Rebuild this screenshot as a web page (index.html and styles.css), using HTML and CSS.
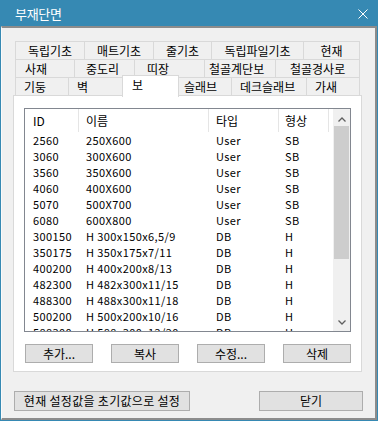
FILE: index.html
```html
<!DOCTYPE html>
<html>
<head>
    <meta charset="utf-8">
    <title>부재단면</title>
    <link rel="stylesheet" href="styles.css">
</head>
<body>
    <div class="window">
        <div class="titlebar">
            <span class="title">부재단면</span>
            <svg class="close" width="10" height="10" viewBox="0 0 10 10">
                <path d="M0.5 0.5 L9.5 9.5 M9.5 0.5 L0.5 9.5" stroke="#fff" stroke-width="1" fill="none"/>
            </svg>
        </div>

        <div class="client">
            <!-- Tab rows -->
            <div class="tabs">
                <div class="tabrow row1">
                    <div class="tab">독립기초</div>
                    <div class="tab">매트기초</div>
                    <div class="tab">줄기초</div>
                    <div class="tab">독립파일기초</div>
                    <div class="tab">현재</div>
                </div>
                <div class="tabrow row2">
                    <div class="tab">사재</div>
                    <div class="tab">중도리</div>
                    <div class="tab">띠장</div>
                    <div class="tab">철골계단보</div>
                    <div class="tab">철골경사로</div>
                </div>
                <div class="tabrow row3">
                    <div class="tab">기둥</div>
                    <div class="tab">벽</div>
                    <div class="tab active">보</div>
                    <div class="tab">슬래브</div>
                    <div class="tab">데크슬래브</div>
                    <div class="tab">가새</div>
                </div>
            </div>

            <!-- Tab page -->
            <div class="page">
                <div class="list">
                    <div class="table">
                        <div class="thead">
                            <div class="th c1">ID</div>
                            <div class="th c2">이름</div>
                            <div class="th c3">타입</div>
                            <div class="th c4">형상</div>
                        </div>
                        <div class="tbody">
                            <div class="tr"><div class="td c1">2560</div><div class="td c2">250X600</div><div class="td c3">User</div><div class="td c4">SB</div></div>
                            <div class="tr"><div class="td c1">3060</div><div class="td c2">300X600</div><div class="td c3">User</div><div class="td c4">SB</div></div>
                            <div class="tr"><div class="td c1">3560</div><div class="td c2">350X600</div><div class="td c3">User</div><div class="td c4">SB</div></div>
                            <div class="tr"><div class="td c1">4060</div><div class="td c2">400X600</div><div class="td c3">User</div><div class="td c4">SB</div></div>
                            <div class="tr"><div class="td c1">5070</div><div class="td c2">500X700</div><div class="td c3">User</div><div class="td c4">SB</div></div>
                            <div class="tr"><div class="td c1">6080</div><div class="td c2">600X800</div><div class="td c3">User</div><div class="td c4">SB</div></div>
                            <div class="tr"><div class="td c1">300150</div><div class="td c2">H 300x150x6,5/9</div><div class="td c3">DB</div><div class="td c4">H</div></div>
                            <div class="tr"><div class="td c1">350175</div><div class="td c2">H 350x175x7/11</div><div class="td c3">DB</div><div class="td c4">H</div></div>
                            <div class="tr"><div class="td c1">400200</div><div class="td c2">H 400x200x8/13</div><div class="td c3">DB</div><div class="td c4">H</div></div>
                            <div class="tr"><div class="td c1">482300</div><div class="td c2">H 482x300x11/15</div><div class="td c3">DB</div><div class="td c4">H</div></div>
                            <div class="tr"><div class="td c1">488300</div><div class="td c2">H 488x300x11/18</div><div class="td c3">DB</div><div class="td c4">H</div></div>
                            <div class="tr"><div class="td c1">500200</div><div class="td c2">H 500x200x10/16</div><div class="td c3">DB</div><div class="td c4">H</div></div>
                            <div class="tr"><div class="td c1">588300</div><div class="td c2">H 588x300x12/20</div><div class="td c3">DB</div><div class="td c4">H</div></div>
                        </div>
                    </div>
                    <div class="scrollbar">
                        <div class="sb-btn up">
                            <svg width="8" height="5" viewBox="0 0 8 5"><path d="M0.5 4.5 L4 1 L7.5 4.5" stroke="#606060" stroke-width="1.3" fill="none"/></svg>
                        </div>
                        <div class="sb-thumb"></div>
                        <div class="sb-track"></div>
                        <div class="sb-btn down">
                            <svg width="8" height="5" viewBox="0 0 8 5"><path d="M0.5 0.5 L4 4 L7.5 0.5" stroke="#606060" stroke-width="1.3" fill="none"/></svg>
                        </div>
                    </div>
                </div>

                <div class="page-buttons">
                    <button class="btn">추가...</button>
                    <button class="btn">복사</button>
                    <button class="btn">수정...</button>
                    <button class="btn">삭제</button>
                </div>
            </div>

            <div class="footer">
                <button class="btn btn-wide">현재 설정값을 초기값으로 설정</button>
                <button class="btn btn-close">닫기</button>
            </div>
        </div>
    </div>
</body>
</html>
```

FILE: styles.css
```css
body { margin: 0; }

.window {
    width: 378px;
    height: 421px;
    box-sizing: border-box;
    border: 1px solid #3689b3;
    background: #f0f0f0;
    display: flex;
    flex-direction: column;
    font-family: "Noto Sans CJK KR", sans-serif;
    font-size: 12px;
    color: #000;
}

.titlebar {
    height: 25px;
    flex: none;
    background: #3689b3;
    color: #fff;
    display: flex;
    align-items: center;
    justify-content: space-between;
    padding: 0 9px 0 14px;
}
.title { font-size: 13px; line-height: 25px; letter-spacing: -0.3px; }
.close { display: block; }

.client {
    flex: 1;
    border-top: 2px solid #8c8c8c;
    border-left: 1px solid #fafafa;
    border-right: 2px solid #8c8c8c;
    border-bottom: 2px solid #8c8c8c;
}

/* tabs */
.tabs { margin: 13px 0 0 13px; width: 345px; }
.tabrow { display: grid; height: 19px; }
.tabrow + .tabrow { margin-top: -1px; }
.row1 { grid-template-columns: 70px 69px 58px 92px 56px; }
.row2 { grid-template-columns: 60px 60px 70px 71px 84px; }
.row3 { grid-template-columns: 54px 54px 56px 53px 75px 53px; }

.tab {
    border: 1px solid #d9d9d9;
    border-left: none;
    background: #f0f0f0;
    line-height: 17px;
    white-space: nowrap;
}
.tab:first-child { border-left: 1px solid #d9d9d9; }
.row1 .tab { text-align: center; }
.row2 .tab:nth-child(1) { padding-left: 9px; }
.row2 .tab:nth-child(2) { padding-left: 11px; }
.row2 .tab:nth-child(3) { padding-left: 12px; }
.row2 .tab:nth-child(4) { padding-left: 4px; }
.row2 .tab:nth-child(5) { padding-left: 14px; }
.row3 .tab { padding-left: 8px; }
.row3 .tab:nth-child(4) { padding-left: 5px; }

.tab.active {
    background: #fff;
    border-left: 1px solid #d9d9d9;
    border-bottom: none;
    margin: -2px 0 -1px -1px;
    padding-left: 9px;
    position: relative;
    z-index: 1;
}

/* tab page */
.page {
    margin: -1px 0 0 11px;
    width: 349px;
    height: 277px;
    box-sizing: border-box;
    border: 1px solid #d9d9d9;
    background: #fff;
    padding: 12px 0 0 10px;
}

.list {
    width: 327px;
    height: 224px;
    box-sizing: border-box;
    border: 1px solid #828790;
    display: flex;
}
.table { width: 308px; overflow: hidden; }
.thead { display: flex; height: 23px; }
.th {
    box-sizing: border-box;
    border-right: 1px solid #e5e5e5;
    line-height: 23px;
    white-space: nowrap;
}
.tbody {
    height: 199px;
    overflow: hidden;
    font-size: 11px;
    letter-spacing: 0.4px;
}
.tr { display: flex; height: 16px; line-height: 16px; }
.td { box-sizing: border-box; white-space: nowrap; }

.c1 { width: 54px; padding-left: 8px; }
.c2 { width: 130px; padding-left: 7px; }
.c3 { width: 70px; padding-left: 7px; }
.c4 { width: 50px; padding-left: 6px; }

.scrollbar {
    width: 17px;
    background: #f0f0f0;
    display: flex;
    flex-direction: column;
}
.sb-btn { height: 17px; display: flex; justify-content: center; align-items: center; }
.sb-btn svg { display: block; }
.sb-btn.up { padding-top: 3px; box-sizing: border-box; }
.sb-thumb { margin: 0 1px; height: 133px; background: #cdcdcd; }
.sb-track { flex: 1; }

/* buttons */
.btn {
    box-sizing: border-box;
    height: 19px;
    width: 68px;
    padding: 0;
    border: 1px solid #adadad;
    background: #e1e1e1;
    font-family: "Noto Sans CJK KR", sans-serif;
    font-size: 12px;
    line-height: 17px;
    color: #000;
    text-align: center;
}
.page-buttons {
    display: flex;
    justify-content: space-between;
    width: 326px;
    margin: 12px 0 0 1px;
}

.footer {
    display: flex;
    justify-content: space-between;
    padding: 19px 12px 0;
}
.btn-wide { width: 176px; height: 20px; line-height: 18px; letter-spacing: 0.3px; }
.btn-close { width: 104px; height: 20px; line-height: 18px; }
```
